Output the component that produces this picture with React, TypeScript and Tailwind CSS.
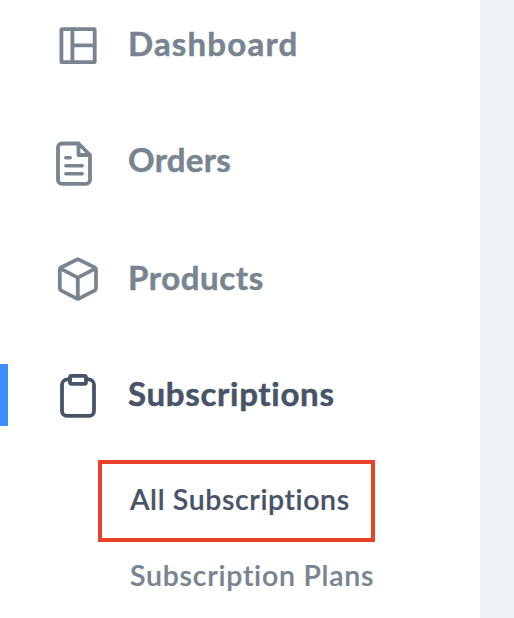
import React, { FC, ReactNode } from "react"
import clsx from "clsx"

interface IconProps {
  children: ReactNode
}

const Icon: FC<IconProps> = ({ children }) => (
  <svg
    className="ml-[52px] h-12 w-12 shrink-0"
    viewBox="0 0 48 48"
    fill="none"
    stroke="currentColor"
    strokeWidth={3.8}
    strokeLinecap="round"
    strokeLinejoin="round"
  >
    {children}
  </svg>
)

const DashboardIcon = () => (
  <Icon>
    <rect x="9.4" y="8.2" width="33.3" height="33" rx="0.8" />
    <path d="M20.4 8.2v33M20.4 24.4h22.3" />
  </Icon>
)

const OrdersIcon = () => (
  <Icon>
    <path d="M26.5 5.5H10a4 4 0 0 0-4 4v32.4a4 4 0 0 0 4 4h24a4 4 0 0 0 4-4V17L26.5 5.5V17H38" />
    <path strokeWidth={3.5} d="M13.8 19.7h4.4M13.8 27.7h16.4M13.8 35.7h16.4" />
  </Icon>
)

const ProductsIcon = () => (
  <Icon>
    <path d="M24.3 5.9 9.4 13.2a2.8 2.8 0 0 0-1.6 2.5v18.4a2.8 2.8 0 0 0 1.6 2.5l14.9 7.8a3.2 3.2 0 0 0 3 0l15.1-7.8a2.8 2.8 0 0 0 1.6-2.5V15.7a2.8 2.8 0 0 0-1.6-2.5L27.3 5.9a3.2 3.2 0 0 0-3 0z" />
    <path d="M8.5 14.6 25.8 23.6l17.5-9M25.8 23.6v21" />
  </Icon>
)

const SubscriptionsIcon = () => (
  <Icon>
    <path d="M18 8.4h-2.5a5.5 5.5 0 0 0-5.5 5.5v26.2a4.8 4.8 0 0 0 4.8 4.8h22.4a4.8 4.8 0 0 0 4.8-4.8V13.9a5.5 5.5 0 0 0-5.5-5.5H34" />
    <rect x="18" y="4.8" width="16" height="8" rx="1.5" />
  </Icon>
)

interface NavItemProps {
  label: string
  icon: ReactNode
  active?: boolean
  textClass?: string
}

const NavItem: FC<NavItemProps> = ({ label, icon, active, textClass }) => (
  <a
    className={clsx(
      "relative flex h-[62px] items-center text-[33px] font-bold leading-none",
      active ? "text-[#475467]" : "text-[#788591]",
    )}
  >
    {active && <span className="absolute left-0 h-full w-2 bg-[#3f8ffb]" />}
    {icon}
    <span className={clsx("ml-7 whitespace-nowrap [-webkit-text-stroke:0.5px]", textClass)}>
      {label}
    </span>
  </a>
)

export default function App() {
  return (
    <div className="flex h-[618px] w-[514px] overflow-hidden bg-[#eff3f6] font-['Lato','Open_Sans',sans-serif]">
      <nav className="w-[480px] bg-white pt-[14px]">
        <div className="flex flex-col gap-[54.67px]">
          <NavItem label="Dashboard" icon={<DashboardIcon />} textClass="pb-1 tracking-[1.2px]" />
          <NavItem label="Orders" icon={<OrdersIcon />} textClass="pb-[5px] tracking-[0.3px]" />
          <NavItem label="Products" icon={<ProductsIcon />} textClass="pb-0.5 tracking-[0.6px]" />
          <NavItem
            label="Subscriptions"
            icon={<SubscriptionsIcon />}
            textClass="pb-0.5 tracking-[0.7px]"
            active
          />
        </div>
        <div className="mt-[34px] flex flex-col items-start text-[28.5px] font-semibold leading-none [-webkit-text-stroke:0.2px]">
          <a className="ml-[98px] flex h-[82px] w-[277px] items-center whitespace-nowrap border-4 border-[#ea4228] pb-1 pl-7 text-[#475467]">
            <span className="tracking-[0.6px]">All Subscriptions</span>
          </a>
          <a className="ml-[130px] mt-[19px] whitespace-nowrap text-[#788591]">
            <span className="tracking-[0.75px]">Subscription Plans</span>
          </a>
        </div>
      </nav>
    </div>
  )
}
